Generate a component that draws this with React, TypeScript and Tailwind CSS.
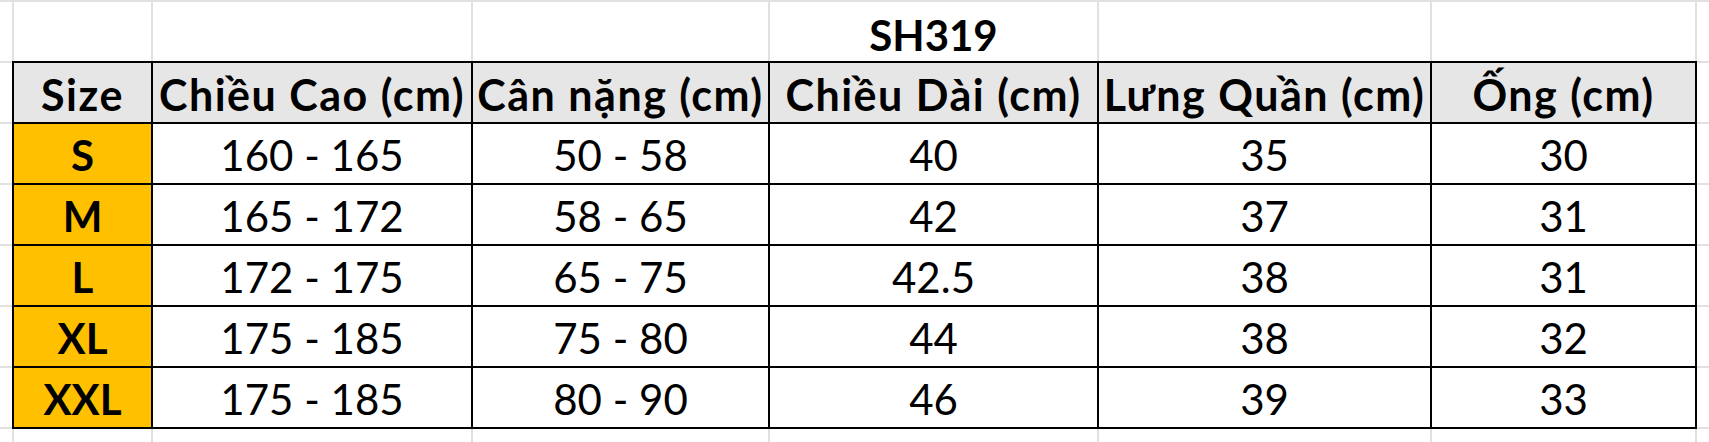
const widths = ['w-[137px]', 'w-[318px]', 'w-[295px]', 'w-[327px]', 'w-[331px]', 'w-[263px]'];

const headers = ['Size', 'Chiều Cao (cm)', 'Cân nặng (cm)', 'Chiều Dài (cm)', 'Lưng Quần (cm)', 'Ống (cm)'];

const rows = [
  ['S', '160 - 165', '50 - 58', '40', '35', '30'],
  ['M', '165 - 172', '58 - 65', '42', '37', '31'],
  ['L', '172 - 175', '65 - 75', '42.5', '38', '31'],
  ['XL', '175 - 185', '75 - 80', '44', '38', '32'],
  ['XXL', '175 - 185', '80 - 90', '46', '39', '33'],
];

// a plain sheet row: white cells split by light gridlines
function SheetRow({ height, children }: { height: string; children?: (i: number) => React.ReactNode }) {
  return (
    <div className={`flex gap-[2px] bg-[#e1e1e1] ${height}`}>
      <div className="w-[12px] bg-white" />
      {widths.map((w, i) => (
        <div key={i} className={`${w} flex items-center justify-center bg-white`}>
          {children?.(i)}
        </div>
      ))}
      <div className="w-[12px] bg-white" />
    </div>
  );
}

// side strip next to the table, keeps the row gridlines going
function SideStrip() {
  return (
    <div className="flex w-[12px] flex-col gap-[2px] bg-[#e1e1e1] py-[2px]">
      {[0, 1, 2, 3, 4, 5].map((i) => (
        <div key={i} className="h-[59px] bg-white" />
      ))}
    </div>
  );
}

export default function App() {
  return (
    <div
      className="h-[442px] w-[1709px] overflow-hidden bg-white text-black"
      style={{ fontFamily: 'Lato, "Noto Sans", sans-serif' }}
    >
      <div className="h-[2px] bg-[#e1e1e1]" />

      {/* Title row */}
      <SheetRow height="h-[59px]">
        {(i) =>
          i === 3 ? <span className="pt-[6px] text-[42px] font-bold leading-none">SH319</span> : null
        }
      </SheetRow>

      <div className="flex">
        <SideStrip />

        {/* Size table */}
        <div className="flex flex-col gap-[2px] bg-black p-[2px]">
          <div className="flex h-[59px] gap-[2px]">
            {headers.map((h, i) => (
              <div
                key={h}
                className={`${widths[i]} flex items-center justify-center bg-[#e7e6e6] pt-[4px] text-[43px] font-bold leading-none tracking-[1.5px] whitespace-nowrap`}
              >
                {h}
              </div>
            ))}
          </div>
          {rows.map((r) => (
            <div key={r[0]} className="flex h-[59px] gap-[2px]">
              {r.map((c, i) => (
                <div
                  key={i}
                  className={`${widths[i]} flex items-center justify-center pt-[2px] text-[42px] leading-none ${
                    i === 0 ? 'bg-[#ffc000] font-bold' : 'bg-white'
                  }`}
                >
                  {c}
                </div>
              ))}
            </div>
          ))}
        </div>

        <SideStrip />
      </div>

      <SheetRow height="h-[13px]" />
    </div>
  );
}
